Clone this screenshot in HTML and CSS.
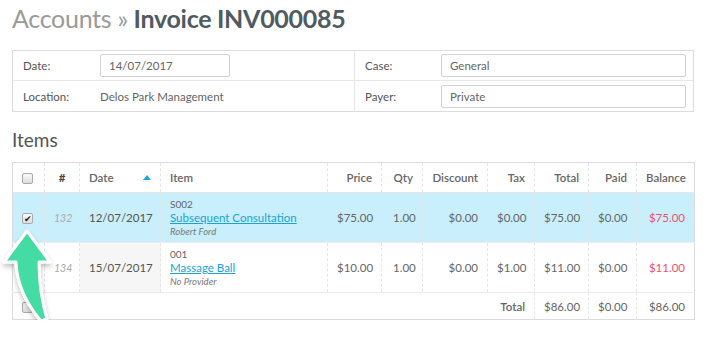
FILE: index.html
```html
<!DOCTYPE html>
<html lang="en">
  <head>
    <meta charset="UTF-8" />
    <title>Invoice INV000085</title>
    <link rel="stylesheet" href="styles.css">
  </head>
  <body>
    <h1 class="titulo"><span class="crumb">Accounts &raquo;</span> Invoice INV000085</h1>

    <div class="detalhes">
      <div class="rotulo">Date:</div>
      <div class="valor"><input class="campo campo-curto" value="14/07/2017"></div>
      <div class="rotulo divisor">Case:</div>
      <div class="valor"><input class="campo campo-longo" value="General"></div>

      <div class="rotulo ultima">Location:</div>
      <div class="valor ultima">Delos Park Management</div>
      <div class="rotulo divisor ultima">Payer:</div>
      <div class="valor ultima"><input class="campo campo-longo" value="Private"></div>
    </div>

    <h2 class="secao">Items</h2>

    <table class="itens">
      <colgroup>
        <col style="width: 32px">
        <col style="width: 35px">
        <col style="width: 81px">
        <col style="width: 167px">
        <col style="width: 54px">
        <col style="width: 41px">
        <col style="width: 65px">
        <col style="width: 47px">
        <col style="width: 54px">
        <col style="width: 48px">
        <col style="width: 58px">
      </colgroup>
      <thead>
        <tr>
          <th class="col-check"><span class="caixa"></span></th>
          <th class="col-num">#</th>
          <th class="col-data">Date <span class="seta-ordem"></span></th>
          <th>Item</th>
          <th class="num">Price</th>
          <th class="num">Qty</th>
          <th class="num">Discount</th>
          <th class="num">Tax</th>
          <th class="num">Total</th>
          <th class="num">Paid</th>
          <th class="num">Balance</th>
        </tr>
      </thead>
      <tbody>
        <tr class="selecionado">
          <td class="col-check"><span class="caixa marcada">&#10004;</span></td>
          <td class="id">132</td>
          <td class="data">12/07/2017</td>
          <td class="item">
            <div class="codigo">S002</div>
            <a href="#">Subsequent Consultation</a>
            <div class="prestador">Robert Ford</div>
          </td>
          <td class="num">$75.00</td>
          <td class="qtd">1.00</td>
          <td class="num">$0.00</td>
          <td class="num">$0.00</td>
          <td class="num">$75.00</td>
          <td class="num">$0.00</td>
          <td class="num devido">$75.00</td>
        </tr>
        <tr>
          <td class="col-check"></td>
          <td class="id">134</td>
          <td class="data ordenada">15/07/2017</td>
          <td class="item">
            <div class="codigo">001</div>
            <a href="#">Massage Ball</a>
            <div class="prestador">No Provider</div>
          </td>
          <td class="num">$10.00</td>
          <td class="qtd">1.00</td>
          <td class="num">$0.00</td>
          <td class="num">$1.00</td>
          <td class="num">$11.00</td>
          <td class="num">$0.00</td>
          <td class="num devido">$11.00</td>
        </tr>
      </tbody>
      <tfoot>
        <tr>
          <td class="col-check"><span class="caixa"></span></td>
          <td colspan="7" class="rotulo-total">Total</td>
          <td class="num">$86.00</td>
          <td class="num">$0.00</td>
          <td class="num">$86.00</td>
        </tr>
      </tfoot>
    </table>

    <!-- seta de destaque por cima da tabela -->
    <svg class="seta-destaque" width="64" height="124" viewBox="0 0 64 124">
      <defs>
        <filter id="sombra" x="-30%" y="-30%" width="160%" height="160%">
          <feDropShadow dx="0" dy="3" stdDeviation="2.5" flood-color="#000" flood-opacity="0.25" />
        </filter>
      </defs>
      <path d="M27 9 L50 40 L39 40 C39 60 42 80 47 97 L41 99 C30 86 17 66 16 40 L4 40 Z"
            fill="#45dba4" stroke="#fff" stroke-width="3" stroke-linejoin="round" filter="url(#sombra)" />
    </svg>
  </body>
</html>
```

FILE: styles.css
```css
* {
  margin: 0;
  padding: 0;
  box-sizing: border-box;
}

body {
  font-family: Lato, "Open Sans", sans-serif;
  color: #555;
  padding: 0 18px 0 12px;
  position: relative;
  background: #fff;
}

.titulo {
  font-size: 25px;
  font-weight: bold;
  color: #505a62;
  line-height: 36px;
  letter-spacing: -0.3px;
}

.titulo .crumb {
  color: #9a9a9a;
  font-weight: normal;
}

.detalhes {
  display: grid;
  grid-template-columns: 77px 264px 77px 1fr;
  margin-top: 14px;
  border: 1px solid #dcdcdc;
  font-size: 11.5px;
}

.detalhes > div {
  height: 30px;
  display: flex;
  align-items: center;
  padding-left: 10px;
  border-bottom: 1px solid #e8e8e8;
}

.detalhes > .ultima {
  border-bottom: none;
}

.detalhes .rotulo {
  color: #555;
}

.detalhes .valor {
  color: #666;
}

.detalhes .divisor {
  border-left: 1px solid #e5e5e5;
}

.campo {
  font-family: inherit;
  font-size: 11.5px;
  color: #666;
  height: 23px;
  border: 1px solid #d2d2d2;
  border-radius: 2px;
  padding: 0 8px;
}

.campo-curto {
  width: 130px;
}

.campo-longo {
  width: 245px;
}

.secao {
  font-size: 19px;
  font-weight: normal;
  color: #555;
  margin-top: 15px;
  line-height: 26px;
}

.itens {
  width: 682px;
  table-layout: fixed;
  margin-top: 9px;
  border-collapse: collapse;
  border: 1px solid #dcdcdc;
  font-size: 11.5px;
}

.itens th,
.itens td {
  padding: 0 9px;
  border-left: 1px dashed #e6e6e6;
  text-align: left;
  vertical-align: middle;
  white-space: nowrap;
}

.itens th {
  height: 30px;
  color: #666;
  font-weight: 600;
  border-bottom: 1px solid #e6e6e6;
}

.itens .num {
  text-align: right;
}

.itens .qtd {
  padding-left: 11px;
}

.itens tbody td {
  height: 50px;
  border-bottom: 1px solid #ececec;
  color: #666;
}

.itens tfoot td {
  height: 27px;
  color: #666;
}

.col-data {
  position: relative;
}

.itens th.col-num {
  text-align: center;
  color: #444;
  font-weight: bold;
}

.seta-ordem {
  position: absolute;
  right: 9px;
  top: 12px;
  border-left: 4px solid transparent;
  border-right: 4px solid transparent;
  border-bottom: 5px solid #1ea7d6;
}

.caixa {
  display: inline-block;
  width: 11px;
  height: 11px;
  border: 1px solid #aaa;
  border-radius: 2px;
  background: linear-gradient(#fafafa, #ddd);
  vertical-align: middle;
  font-size: 9px;
  line-height: 9px;
  text-align: center;
  color: #222;
}

.itens .id {
  color: #aaa;
  font-style: italic;
  font-size: 10.5px;
  text-align: center;
}

.itens .data {
  font-size: 11.5px;
  color: #555;
}

.itens .ordenada {
  background: #f6f6f6;
}

.itens .item {
  line-height: 14px;
}

.codigo {
  font-size: 10px;
  color: #666;
}

.item a {
  color: #1aa3d6;
  text-decoration: underline;
  font-size: 11.5px;
}

.prestador {
  font-size: 9.5px;
  font-style: italic;
  color: #777;
}

.itens .devido {
  color: #f0506e;
}

.itens tr.selecionado td {
  background: #c8effb;
}

.itens .rotulo-total {
  text-align: right;
  font-weight: 600;
  border-left: none;
}

.seta-destaque {
  position: absolute;
  left: 0;
  top: 222px;
}
```
